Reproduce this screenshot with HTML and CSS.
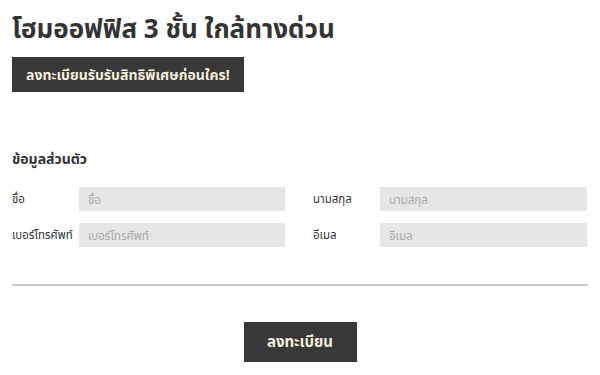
FILE: index.html
```html
<!DOCTYPE html>
<html lang="th">
  <head>
    <meta charset="UTF-8" />
    <meta name="viewport" content="width=device-width, initial-scale=1.0"/>
    <title>ลงทะเบียน</title>
    <link rel="stylesheet" href="styles.css">
  </head>
  <body>
    <div class="page">
      <h1 class="title">โฮมออฟฟิส 3 ชั้น ใกล้ทางด่วน</h1>
      <div class="promo">ลงทะเบียนรับรับสิทธิพิเศษก่อนใคร!</div>

      <form class="reg-form">
        <h2 class="section-title">ข้อมูลส่วนตัว</h2>
        <div class="fields">
          <label class="field">
            <span class="field-label">ชื่อ</span>
            <input type="text" placeholder="ชื่อ">
          </label>
          <label class="field">
            <span class="field-label">นามสกุล</span>
            <input type="text" placeholder="นามสกุล">
          </label>
          <label class="field">
            <span class="field-label">เบอร์โทรศัพท์</span>
            <input type="text" placeholder="เบอร์โทรศัพท์">
          </label>
          <label class="field">
            <span class="field-label">อีเมล</span>
            <input type="text" placeholder="อีเมล">
          </label>
        </div>
        <hr class="divider">
        <div class="actions">
          <button type="button" class="submit">ลงทะเบียน</button>
        </div>
      </form>
    </div>
  </body>
</html>
```
FILE: styles.css
```css
body {
  margin: 0;
  padding: 0;
  background-color: #ffffff;
  font-family: "Noto Sans", "Noto Sans Thai", "Noto Looped Thai", Roboto, sans-serif;
  color: #333333;
}

.page {
  padding: 8px 12px 0;
}

.title {
  margin: 0;
  font-size: 26px;
  font-weight: bold;
  color: #333333;
  line-height: 40px;
}

.promo {
  display: inline-block;
  margin-top: 9px;
  padding: 0 14px;
  height: 35px;
  line-height: 35px;
  background-color: #383838;
  color: #f6f0dc;
  font-size: 14px;
  font-weight: bold;
}

.reg-form {
  margin-top: 56px;
}

.section-title {
  margin: 0 0 17px;
  font-size: 14px;
  font-weight: bold;
  line-height: 22px;
}

.fields {
  display: grid;
  grid-template-columns: 273px 274px;
  column-gap: 28px;
  row-gap: 12px;
}

.field {
  display: flex;
  align-items: center;
}

.field-label {
  width: 67px;
  flex: none;
  font-size: 11.5px;
  white-space: nowrap;
}

.field input {
  flex: 1;
  min-width: 0;
  height: 24px;
  box-sizing: border-box;
  border: none;
  background-color: #e6e6e6;
  padding: 0 9px;
  font-family: inherit;
  font-size: 11.5px;
  color: #333333;
}

.field input::placeholder {
  color: #aaaaaa;
}

.divider {
  margin: 37px 0 0;
  border: none;
  height: 2px;
  background-color: #cccccc;
}

.actions {
  display: flex;
  justify-content: center;
  padding-top: 36px;
}

.submit {
  width: 113px;
  height: 40px;
  border: none;
  background-color: #383838;
  color: #f6f0dc;
  font-family: inherit;
  font-size: 15px;
  font-weight: bold;
}
```
